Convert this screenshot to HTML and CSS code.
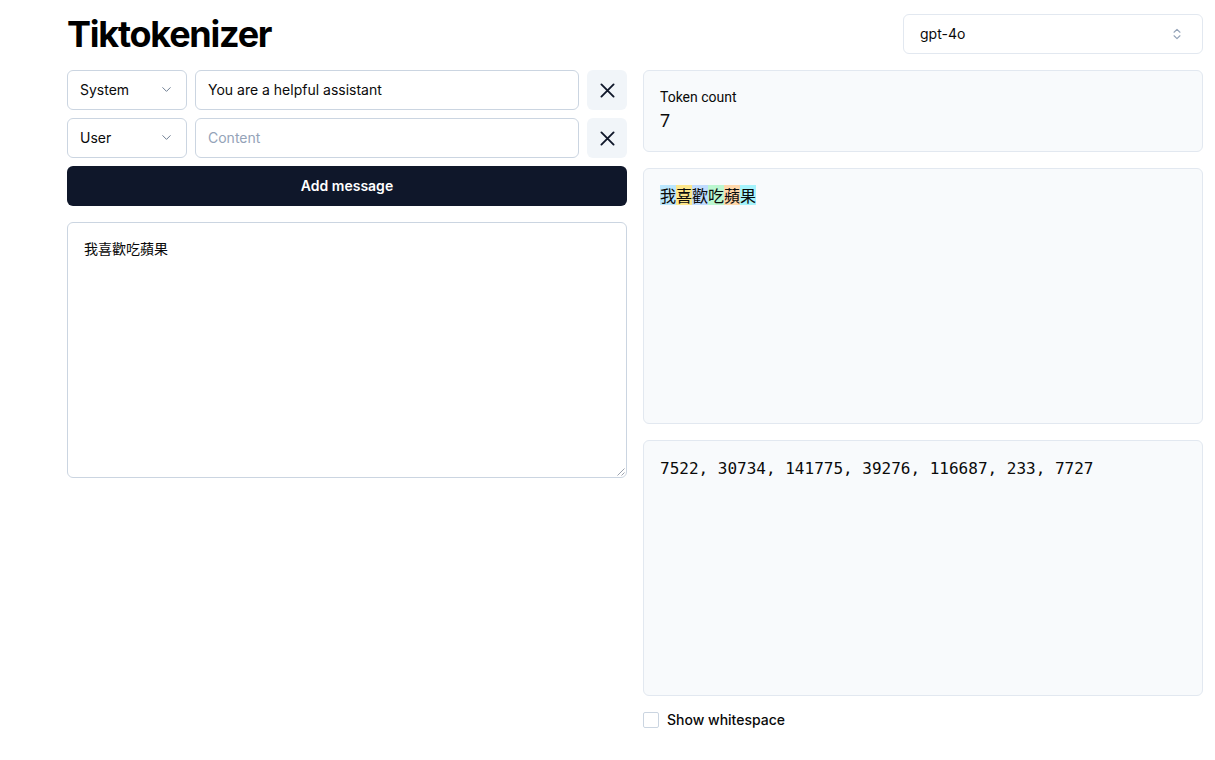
FILE: index.html
```html
<!DOCTYPE html>
<html lang="en">
<head>
<meta charset="utf-8">
<title>Tiktokenizer</title>
<link rel="stylesheet" href="styles.css">
</head>
<body>
<div class="page">
  <header class="header">
    <h1 class="title">Tiktokenizer</h1>
    <div class="model-select">
      <span>gpt-4o</span>
      <svg class="updown" width="16" height="16" viewBox="0 0 24 24" fill="none" stroke="currentColor" stroke-width="2" stroke-linecap="round" stroke-linejoin="round"><path d="m7 15 5 5 5-5"/><path d="m7 9 5-5 5 5"/></svg>
    </div>
  </header>
  <main class="columns">
    <section class="left">
      <div class="msg-row">
        <div class="role-select"><span>System</span><svg width="16" height="16" viewBox="0 0 24 24" fill="none" stroke="currentColor" stroke-width="1.5" stroke-linecap="round" stroke-linejoin="round"><path d="m6 9 6 6 6-6"/></svg></div>
        <div class="msg-input">You are a helpful assistant</div>
        <button class="remove-btn" aria-label="Remove"><svg width="16" height="16" viewBox="0 0 16 16" fill="none" stroke="currentColor" stroke-width="2" stroke-linecap="round"><path d="M1.5 1.5 14.5 14.5M14.5 1.5 1.5 14.5"/></svg></button>
      </div>
      <div class="msg-row">
        <div class="role-select"><span>User</span><svg width="16" height="16" viewBox="0 0 24 24" fill="none" stroke="currentColor" stroke-width="1.5" stroke-linecap="round" stroke-linejoin="round"><path d="m6 9 6 6 6-6"/></svg></div>
        <div class="msg-input placeholder">Content</div>
        <button class="remove-btn" aria-label="Remove"><svg width="16" height="16" viewBox="0 0 16 16" fill="none" stroke="currentColor" stroke-width="2" stroke-linecap="round"><path d="M1.5 1.5 14.5 14.5M14.5 1.5 1.5 14.5"/></svg></button>
      </div>
      <button class="add-btn">Add message</button>
      <div class="textarea">我喜歡吃蘋果<svg class="resize" width="9" height="9" viewBox="0 0 9 9" stroke="#9ca3af" stroke-width="1"><path d="M8.5 1.5 1.5 8.5M8.5 5.5 5.5 8.5"/></svg></div>
    </section>
    <section class="right">
      <div class="card count-card">
        <div class="count-label">Token count</div>
        <div class="count-value">7</div>
      </div>
      <div class="card big-card">
        <div class="tokens"><span class="t sky">我</span><span class="t amber">喜</span><span class="t blue">歡</span><span class="t green">吃</span><span class="t orange">蘋</span><span class="t cyan">果</span></div>
      </div>
      <div class="card big-card">
        <div class="ids">7522, 30734, 141775, 39276, 116687, 233, 7727</div>
      </div>
      <label class="ws"><span class="checkbox"></span>Show whitespace</label>
    </section>
  </main>
</div>
</body>
</html>
```
FILE: styles.css
```css
* { box-sizing: border-box; }
html, body { margin: 0; padding: 0; background: #fff; }
body {
  font-family: Inter, "Noto Sans CJK TC", sans-serif;
  color: #0a0a0a;
  font-size: 14px;
}
.page {
  padding: 14px 12px 0 67px;
}
.header {
  display: flex;
  justify-content: space-between;
  align-items: center;
  height: 40px;
}
.title {
  margin: 0;
  font-size: 36px;
  font-weight: 700;
  letter-spacing: -1.25px;
  color: #000;
}
.model-select {
  width: 300px;
  height: 40px;
  border: 1px solid #e2e8f0;
  border-radius: 6px;
  display: flex;
  align-items: center;
  justify-content: space-between;
  padding: 0 16px;
  font-size: 14px;
  line-height: 18px;
  padding-bottom: 1px;
}
.updown { color: #94a3b8; width: 14px; height: 14px; margin-right: 2px; }
.columns {
  margin-top: 16px;
  display: grid;
  grid-template-columns: 560px 560px;
  gap: 16px;
  align-items: start;
}
.left { display: flex; flex-direction: column; gap: 8px; }
.msg-row { display: flex; gap: 8px; }
.role-select {
  width: 120px;
  height: 40px;
  flex: none;
  border: 1px solid #cbd5e1;
  border-radius: 6px;
  display: flex;
  align-items: center;
  justify-content: space-between;
  padding: 0 12px 1px;
}
.role-select svg { color: #64748b; width: 15px; height: 15px; }
.msg-input {
  flex: 1;
  height: 40px;
  border: 1px solid #cbd5e1;
  border-radius: 6px;
  display: flex;
  align-items: center;
  padding: 0 12px 1px;
}
.msg-input.placeholder { color: #94a3b8; }
.remove-btn {
  width: 40px;
  height: 40px;
  flex: none;
  border: 0;
  border-radius: 6px;
  background: #f1f5f9;
  color: #0f172a;
  display: flex;
  align-items: center;
  justify-content: center;
  padding: 0;
}
.remove-btn svg { width: 15px; height: 15px; }
.add-btn {
  height: 40px;
  border: 0;
  border-radius: 6px;
  background: #0f172a;
  color: #fff;
  font-family: Inter, sans-serif;
  font-size: 14px;
  font-weight: 600;
  padding: 0 0 2px;
}
.textarea {
  margin-top: 8px;
  position: relative;
  height: 256px;
  border: 1px solid #cbd5e1;
  border-radius: 6px;
  padding: 16px;
  line-height: 20px;
  font-size: 14px;
}
.resize { position: absolute; right: 1px; bottom: 1px; }
.right { display: flex; flex-direction: column; gap: 16px; }
.card {
  background: #f8fafc;
  border: 1px solid #e2e8f0;
  border-radius: 6px;
  padding: 16px;
}
.count-card { height: 82px; padding-top: 17px; }
.count-label { font-family: Roboto, sans-serif; font-size: 14px; line-height: 18px; }
.count-value { font-family: Roboto, sans-serif; font-size: 18px; line-height: 24px; margin-top: 3px; }
.big-card { height: 256px; padding-top: 15px; }
.tokens { font-size: 16px; line-height: 22px; font-family: "Noto Sans CJK TC", sans-serif; }
.t { display: inline-block; line-height: 20px; }
.sky { background: #bae6fd; }
.amber { background: #fde68a; }
.blue { background: #bfdbfe; }
.green { background: #bbf7d0; }
.orange { background: #fed7aa; }
.cyan { background: #a5f3fc; }
.ids {
  font-family: "DejaVu Sans Mono", monospace;
  font-size: 16px;
  line-height: 22px;
  padding-top: 2px;
}
.ws {
  display: flex;
  align-items: center;
  gap: 8px;
  font-size: 14px;
  font-weight: 500;
  line-height: 16px;
}
.checkbox {
  width: 16px;
  height: 16px;
  border: 1px solid #cbd5e1;
  border-radius: 2px;
  background: #fff;
}
```
